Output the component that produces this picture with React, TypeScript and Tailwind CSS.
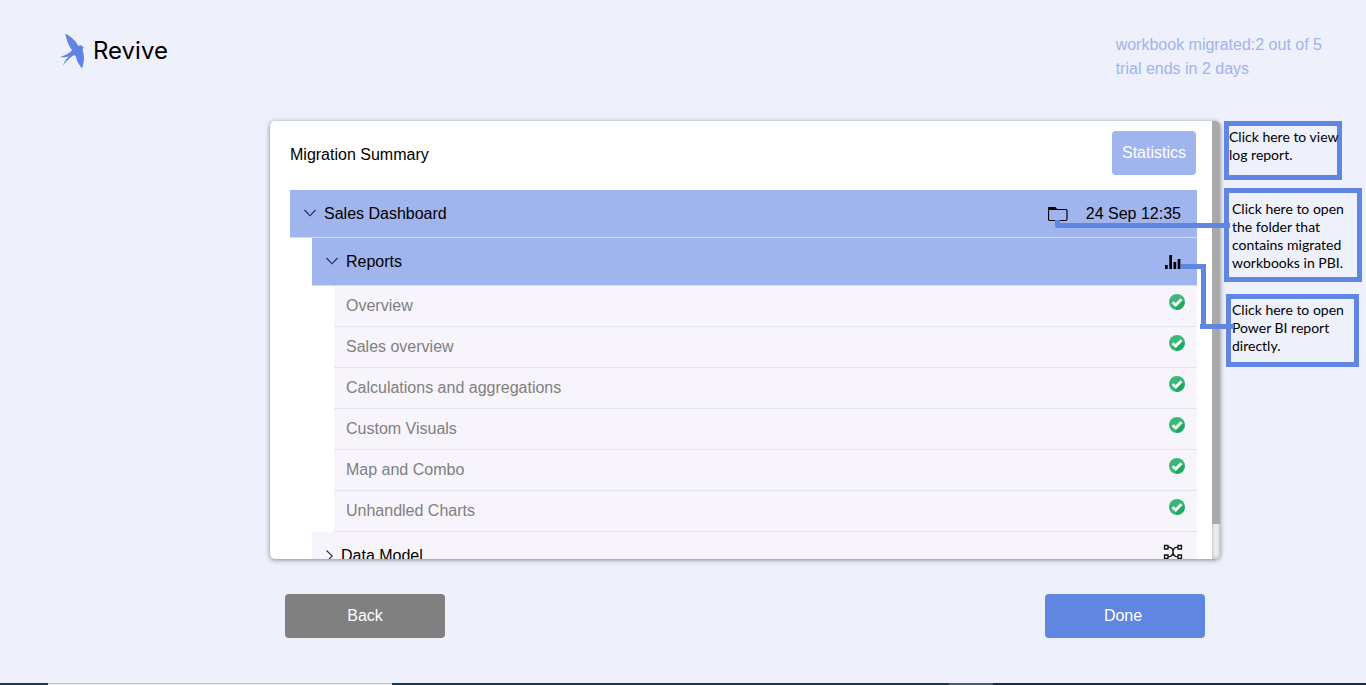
import React, { useState } from "react";

const reports = [
  "Overview",
  "Sales overview",
  "Calculations and aggregations",
  "Custom Visuals",
  "Map and Combo",
  "Unhandled Charts",
];

function BirdLogo() {
  return (
    <svg viewBox="28 40 76 108" className="h-9 w-[25px]" fill="#5f85e2" aria-hidden="true">
      <path d="M44 41 C57 49 73 59 81 74 L84 79 C88 75 94 76 97 81 L101 84 L97 87 C96 94 101 101 101 113 C101 126 98 137 95 147 C88 137 79 128 77 114 C76 110 74 108 70 107 C62 109 53 119 42 129 C47 120 51 114 57 109 C49 112 38 114 29 112 C42 109 53 102 62 95 C66 91 63 88 59 83 C53 74 47 58 44 41 Z" />
      <path d="M60 106 C50 114 41 125 37 139 C43 129 53 118 68 107 Z" />
    </svg>
  );
}

function ChevronDown() {
  return (
    <svg viewBox="0 0 12 8" className="-mt-0.5 h-2 w-3" fill="none" stroke="#1f2a4a" strokeWidth="1.1" aria-hidden="true">
      <path d="M0.5 1 L6 6.8 L11.5 1" />
    </svg>
  );
}

function ChevronRight() {
  return (
    <svg viewBox="0 0 7 12" className="h-3 w-[7px]" fill="none" stroke="#1f2a4a" strokeWidth="1.1" aria-hidden="true">
      <path d="M0.5 0.5 L6.3 6 L0.5 11.5" />
    </svg>
  );
}

function FolderIcon() {
  return (
    <svg viewBox="0 0 20 16" className="h-4 w-5" aria-hidden="true">
      <path d="M0.500 2.500 V13 Q0.500 14.500 2 14.500 H17.500 Q19 14.500 19 13 V4.500 Q19 3.500 18 3.500 H8" fill="none" stroke="#000" strokeWidth="1.200" />
      <path d="M0 4 V2 Q0 1 1 1 H7.500 L9.500 3.200 V4 Z" fill="#000" />
    </svg>
  );
}

function BarsIcon() {
  return (
    <svg viewBox="0 0 16 14" className="h-3.5 w-4" fill="#000" aria-hidden="true">
      <path d="M0 10h2.700v4H0zM4.300 0h2.700v14H4.300zM8.500 7h2.700v7H8.500zM12.700 4h2.700v10h-2.700z" />
    </svg>
  );
}

function ModelIcon() {
  return (
    <svg viewBox="0 0 20 16" className="h-4 w-5" fill="none" stroke="#111" strokeWidth="1.3" aria-hidden="true">
      <path d="M1.500 1.500h3.500v3.500h-3.500zM15 1.500h3.500v3.500H15zM1.500 11h3.500v3.500h-3.500zM15 11h3.500v3.500H15z" />
      <path d="M5 3.200C9 3.200 10 5 10 8S11 12.800 15 12.800M15 3.200C11 3.200 10 5 10 8S9 12.800 5 12.800" />
    </svg>
  );
}

function CheckIcon() {
  return (
    <svg viewBox="0 0 16 16" className="mt-2 h-4 w-4" role="img" aria-label="Migrated">
      <circle cx="8" cy="8" r="8" fill="#3bb877" />
      <path d="M12.600 5.200 L15.700 8.300 A8 8 0 0 1 7.500 16 L4.500 10.500 L7 11.500 Z" fill="#1eaa5e" />
      <path d="M3.600 8.200 L6.800 11 L12.500 5.200" fill="none" stroke="#fff" strokeWidth="2.800" />
    </svg>
  );
}

function Connectors() {
  return (
    <svg
      viewBox="0 0 182 114"
      className="pointer-events-none absolute top-[98px] -left-[166px] h-[114px] w-[182px]"
      fill="none"
      stroke="#6086e1"
      strokeWidth="5"
      aria-hidden="true"
    >
      <path d="M3.500 1 V6.500 H176" strokeLinejoin="round" />
      <path d="M127 47.500 H149.500 V107.500 M146 107.500 H180" />
    </svg>
  );
}

export default function App() {
  const [open, setOpen] = useState(true);
  const [reportsOpen, setReportsOpen] = useState(true);

  return (
    <div className="flex min-h-screen flex-col bg-[#eef0fc] font-['Liberation_Sans',Arial,sans-serif] text-base text-black">
      <header className="flex h-[121px] items-start justify-between pt-[33px] pr-11 pl-[60px]">
        <a href="#" className="flex items-center gap-2">
          <BirdLogo />
          <span className="font-['Inter',sans-serif] text-2xl">Revive</span>
        </a>
        <p className="text-[#a0b4ee]">
          workbook migrated:2 out of 5
          <br />
          trial ends in 2 days
        </p>
      </header>

      <div className="flex pl-[270px]">
        <main className="min-w-0 flex-1">
          <section className="flex h-[438px] overflow-hidden rounded-[5px] bg-white shadow-[0_1px_5px_rgba(0,0,0,0.45)]">
            <div className="min-w-0 flex-1 overflow-y-auto pt-2.5 pr-[15px] pl-5 [scrollbar-width:none]">
              <div className="mb-[15px] flex items-center justify-between pr-px">
                <h1 className="pt-[3px]">Migration Summary</h1>
                <button className="h-11 w-[84px] rounded bg-[#a0b4ee] text-white">Statistics</button>
              </div>

              <div className="flex h-12 items-center justify-between border-b border-[#d5dcf3] bg-[#a0b4ee] pr-4 pl-3.5">
                <button className="flex items-center gap-2" aria-expanded={open} onClick={() => setOpen(!open)}>
                  {open ? <ChevronDown /> : <ChevronRight />}
                  Sales Dashboard
                </button>
                <div className="flex items-center gap-[18px]">
                  <button aria-label="Open folder">
                    <FolderIcon />
                  </button>
                  <time>24 Sep 12:35</time>
                </div>
              </div>

              {open && (
                <div className="pl-[22px]">
                  <div className="flex h-12 items-center justify-between border-b border-[#d5dcf3] bg-[#a0b4ee] pr-4 pl-3.5">
                    <button className="flex items-center gap-2" aria-expanded={reportsOpen} onClick={() => setReportsOpen(!reportsOpen)}>
                      {reportsOpen ? <ChevronDown /> : <ChevronRight />}
                      Reports
                    </button>
                    <button aria-label="Open Power BI report">
                      <BarsIcon />
                    </button>
                  </div>
                  {reportsOpen && (
                    <ul className="pl-[22px]">
                      {reports.map((name) => (
                        <li key={name} className="flex h-[41px] items-start justify-between border-b border-[#e6e6ee] bg-[#f7f4fb] px-3 text-[#808080]">
                          <span className="leading-10">{name}</span>
                          <CheckIcon />
                        </li>
                      ))}
                    </ul>
                  )}
                  <div className="flex h-12 items-center justify-between border-b border-[#e6e6ee] bg-[#f7f4fb] px-3.5">
                    <button className="flex items-center gap-2" aria-expanded={false}>
                      <ChevronRight />
                      Data Model
                    </button>
                    <button className="pb-2" aria-label="Open data model">
                      <ModelIcon />
                    </button>
                  </div>
                </div>
              )}
            </div>
            <div className="w-2 bg-[#f0f0f0] shadow-[inset_0_0_4px_rgba(0,0,0,0.3)]" aria-hidden="true">
              <div className="h-[92%] bg-[#a9a9a9]" />
            </div>
          </section>

          <div className="mt-[35px] flex justify-between px-[15px] text-white">
            <button className="h-11 w-40 rounded bg-[#808080]">Back</button>
            <button className="h-11 w-40 rounded bg-[#6086e1] pr-1">Done</button>
          </div>
        </main>

        <aside className="relative w-[146px] shrink-0 pl-1 font-['Lato',sans-serif] text-sm leading-[18px]">
          <p className="h-[59px] w-[118px] border-5 border-[#6086e1] pt-0.5 whitespace-nowrap">
            Click here to view
            <br />
            log report.
          </p>
          <p className="mt-2 h-[94px] w-[138px] border-5 border-[#6086e1] pt-[7px] pl-[3px] whitespace-nowrap">
            Click here to open
            <br />
            the folder that
            <br />
            contains migrated
            <br />
            workbooks in PBI.
          </p>
          <p className="mt-3 ml-0.5 h-[73px] w-[133px] border-5 border-[#6086e1] pt-0.5 pl-px whitespace-nowrap">
            Click here to open
            <br />
            Power BI report
            <br />
            directly.
          </p>
          <Connectors />
        </aside>
      </div>

      <footer className="mt-auto flex h-0.5 bg-[#1c2b40]" aria-hidden="true">
        <div className="w-12 bg-[#20384a]" />
        <div className="w-[344px] border-t border-[#bcbcc4] bg-[#f4f4f6]" />
        <div className="w-[557px] bg-[#1f3547]" />
        <div className="w-11 bg-[#4d5a6b]" />
      </footer>
    </div>
  );
}
